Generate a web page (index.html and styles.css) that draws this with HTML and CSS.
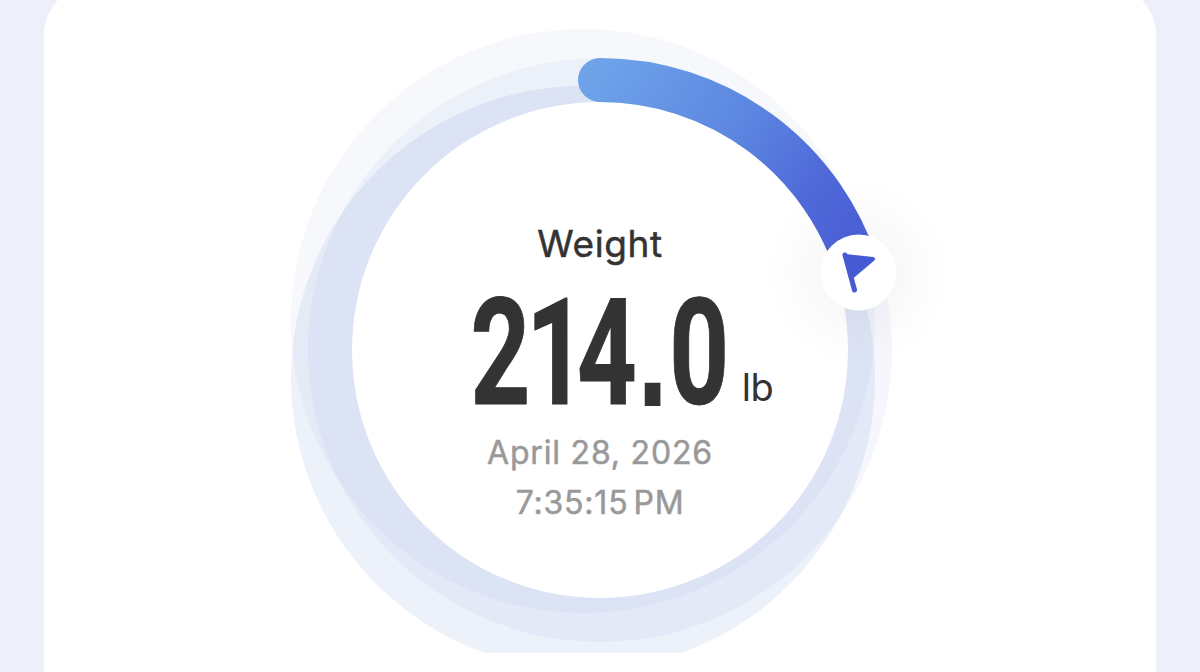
FILE: index.html
```
<!DOCTYPE html>
<html lang="en">
<head>
    <meta charset="utf-8">
    <title>Weight</title>
    <link rel="stylesheet" href="styles.css">
</head>
<body>
    <div class="card">
        <div class="gauge">
            <svg class="dial" viewBox="250 0 700 653">
                <defs>
                    <linearGradient id="progress" gradientUnits="userSpaceOnUse" x1="590" y1="80" x2="840" y2="250">
                        <stop offset="0" stop-color="#6ea3ea"/>
                        <stop offset="0.5" stop-color="#5c86e1"/>
                        <stop offset="0.8" stop-color="#506ad9"/>
                        <stop offset="1" stop-color="#4a60d4"/>
                    </linearGradient>
                    <radialGradient id="shadow">
                        <stop offset="0.35" stop-color="#000" stop-opacity="0.03"/>
                        <stop offset="0.65" stop-color="#000" stop-opacity="0.014"/>
                        <stop offset="1" stop-color="#000" stop-opacity="0"/>
                    </radialGradient>
                </defs>
                <circle class="ring ring-top" cx="583" cy="321" r="292"/>
                <circle class="ring ring-bottom" cx="583" cy="378" r="292"/>
                <circle class="ring ring-track" cx="600" cy="350" r="292"/>
                <circle class="face" cx="600" cy="350" r="248"/>
                <circle cx="858.5" cy="272.5" r="94" fill="url(#shadow)"/>
                <path class="arc" d="M600 80A270 270 0 0 1 858.5 272.5"/>
                <circle class="knob" cx="858.5" cy="272.5" r="38"/>
                <path class="flag" d="M845 256L873 259L853.500 275.500Z"/>
                <path class="pole" d="M845 255L854.500 290"/>
            </svg>
            <div class="reading">
                <div class="label">Weight</div>
                <div class="value">
                    <svg class="number" viewBox="0 0 254 110">
                        <text transform="scale(0.7 1)" x="-5 74.5 147 237 279" y="107.5">214<tspan class="point">.</tspan>0</text>
                    </svg>
                    <span class="unit">lb</span>
                </div>
                <div class="date">April 28, 2026</div>
                <div class="time">7:35:15<span class="meridiem">PM</span></div>
            </div>
        </div>
    </div>
</body>
</html>
```

FILE: styles.css
```
body {
    margin: 0;
    height: 672px;
    display: flex;
    justify-content: center;
    overflow: hidden;
    background-color: #edf0fb;
    font-family: Inter, "Liberation Sans", sans-serif;
    color: #333;
}

.card {
    width: 1112px;
    height: 690px;
    margin-top: -18px;
    padding-top: 18px;
    box-sizing: border-box;
    border-radius: 54px 54px 0 0;
    background: #fff;
}

.gauge {
    display: grid;
    width: 700px;
    height: 653px;
    margin: 0 auto;
    overflow: hidden;
}

.dial,
.reading {
    grid-area: 1 / 1;
}

.dial {
    width: 700px;
    height: 653px;
}

.ring {
    fill: rgb(80, 122, 203);
}

.ring-top {
    fill-opacity: 0.05;
}

.ring-bottom {
    fill-opacity: 0.1;
}

.ring-track {
    fill-opacity: 0.06;
}

.face,
.knob {
    fill: #fff;
}

.arc {
    fill: none;
    stroke: url(#progress);
    stroke-width: 44;
    stroke-linecap: round;
}

.flag {
    fill: #465bd3;
    stroke: #465bd3;
    stroke-width: 4;
    stroke-linejoin: round;
}

.pole {
    fill: none;
    stroke: #465bd3;
    stroke-width: 5;
    stroke-linecap: round;
}

.reading {
    display: flex;
    flex-direction: column;
    align-items: center;
    padding-top: 220px;
    z-index: 1;
}

.label {
    height: 48px;
    line-height: 48px;
    font-size: 37px;
    letter-spacing: 0.6px;
    -webkit-text-stroke: 0.5px #333;
}

.value {
    display: flex;
    align-items: flex-end;
    height: 138px;
    margin-left: 47px;
}

.number {
    width: 254px;
    height: 110px;
    overflow: visible;
}

.number text {
    font-family: Roboto, "Liberation Sans", sans-serif;
    font-size: 149px;
    font-weight: 700;
    fill: #333;
    stroke: #333;
    stroke-width: 1;
}

.number .point {
    font-family: "Liberation Sans", sans-serif;
    font-size: 130px;
    stroke-width: 4;
}

.unit {
    margin-left: 14px;
    font-size: 38px;
    line-height: 38px;
    letter-spacing: -0.5px;
}

.date,
.time {
    height: 50px;
    line-height: 50px;
    font-size: 32px;
    letter-spacing: 0.8px;
    color: #999;
    -webkit-text-stroke: 0.5px #999;
}

.date {
    margin-top: 22px;
}

.meridiem {
    margin-left: 5px;
}
```
